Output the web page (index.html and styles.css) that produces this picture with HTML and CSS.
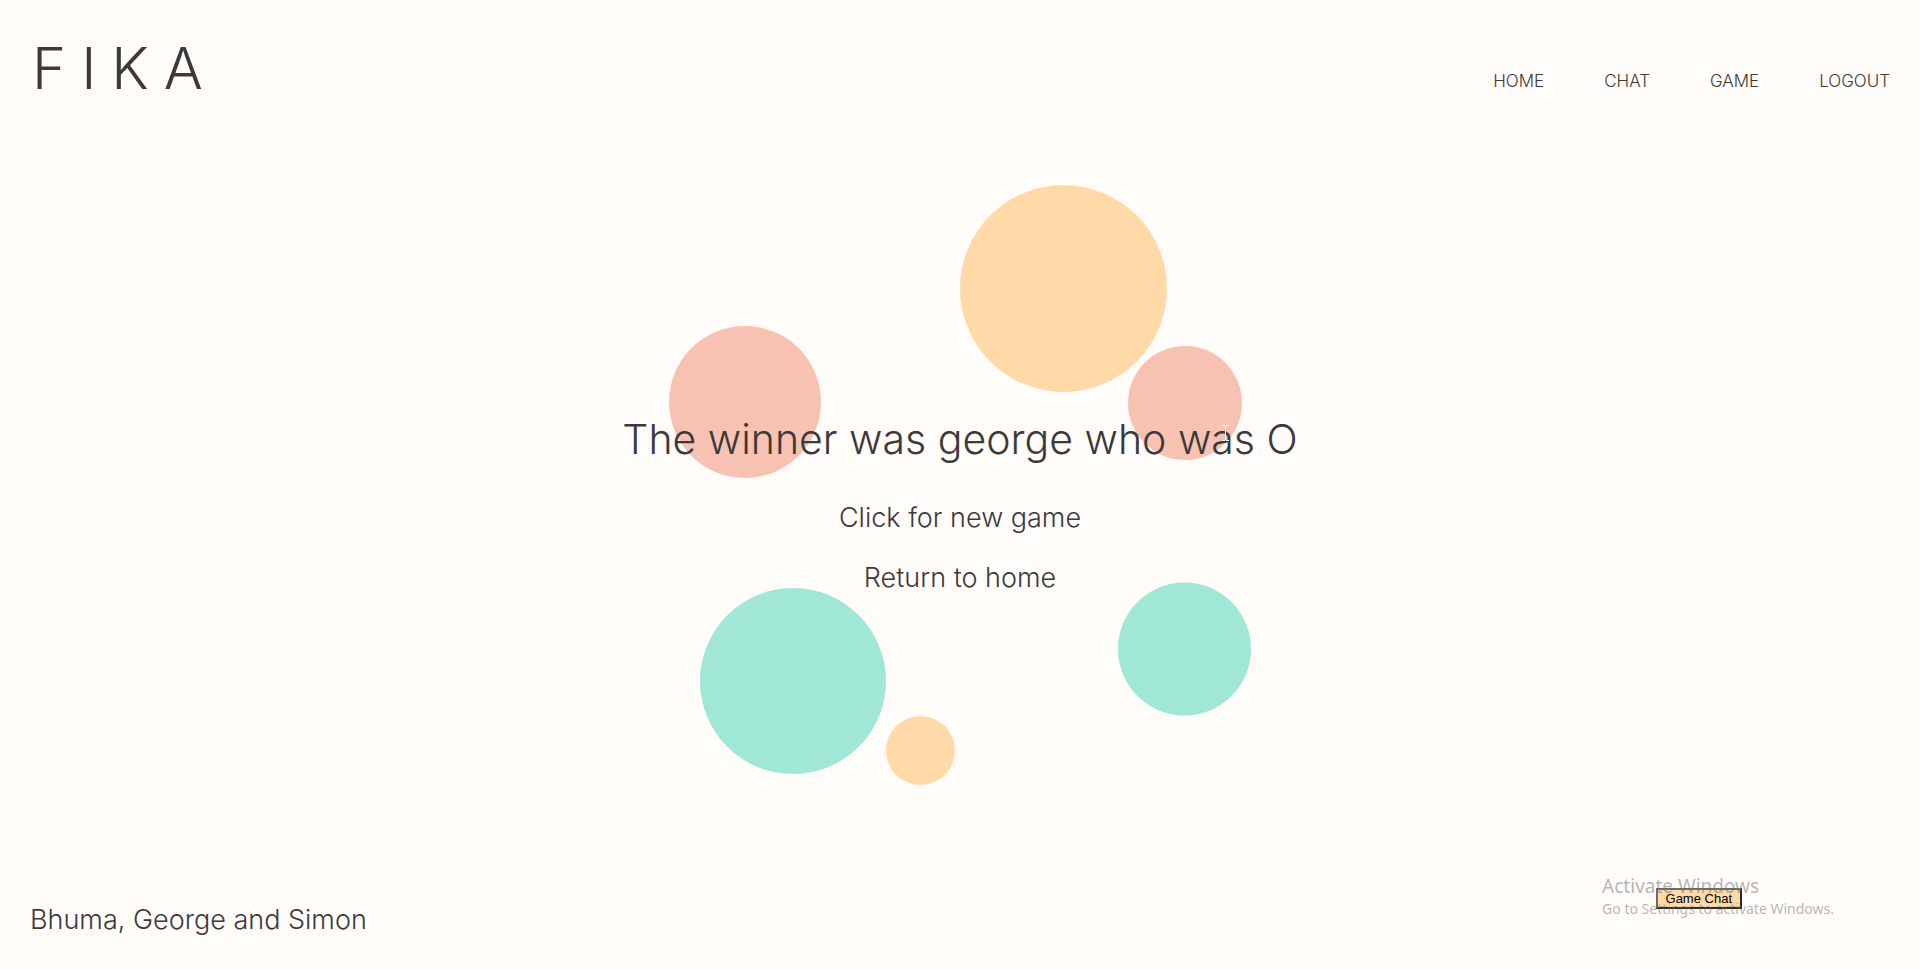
FILE: index.html
```html
<!DOCTYPE html>
<html lang="en">
<head>
<meta charset="utf-8">
<title>Fika</title>
<link rel="stylesheet" href="styles.css">
</head>
<body>
<header class="header">
  <a class="logo" href="#">FIKA</a>
  <nav class="nav">
    <a href="#">HOME</a>
    <a href="#">CHAT</a>
    <a href="#">GAME</a>
    <a href="#">LOGOUT</a>
  </nav>
</header>
<main class="main">
  <svg class="circles" viewBox="0 0 582 600" aria-hidden="true">
    <circle class="sand" cx="394.5" cy="103.5" r="103.5"/>
    <circle class="rose" cx="76" cy="217" r="76"/>
    <circle class="rose" cx="516" cy="218" r="57"/>
    <circle class="mint" cx="124" cy="496" r="93"/>
    <circle class="mint" cx="515.5" cy="464" r="66.5"/>
    <circle class="sand" cx="251.5" cy="565.5" r="34.5"/>
  </svg>
  <div class="result">
    <h1 class="winner">The winner was george who was O</h1>
    <a class="choice" href="#">Click for new game</a>
    <a class="choice" href="#">Return to home</a>
  </div>
  <svg class="pointer" viewBox="0 0 7 16" aria-hidden="true"><path d="M0 .5h3M4 .5h3M3.500 1v14M0 15.500h3M4 15.500h3"/></svg>
</main>
<footer class="footer">
  <p class="authors">Bhuma, George and Simon</p>
  <button class="chat-button" type="button">Game Chat</button>
</footer>
<div class="watermark">
  <p class="watermark-title">Activate Windows</p>
  <p class="watermark-text">Go to Settings to activate Windows.</p>
</div>
</body>
</html>
```
FILE: styles.css
```css
* {
  box-sizing: border-box;
}

body {
  position: relative;
  display: flex;
  flex-direction: column;
  min-height: 100vh;
  margin: 0;
  background: #fffcf9;
  color: #3a3a3a;
  font-family: Inter, "Open Sans", sans-serif;
  font-weight: 300;
}

a {
  color: inherit;
  text-decoration: none;
}

p,
h1 {
  margin: 0;
  font-weight: 300;
}

.header {
  display: flex;
  justify-content: space-between;
  align-items: flex-end;
  padding: 32px 30px 0 32px;
}

.logo {
  font-size: 58px;
  line-height: 72px;
  letter-spacing: 15px;
}

.nav {
  display: flex;
  gap: 60px;
  padding-bottom: 10px;
  font-size: 17px;
  line-height: 26px;
}

.main {
  position: relative;
  flex: 1;
  display: flex;
  justify-content: center;
  padding-top: 300px;
}

.circles {
  position: absolute;
  top: 81px;
  left: 50%;
  width: 582px;
  height: 600px;
  margin-left: -291px;
}

.sand {
  fill: #ffdaa8;
}

.rose {
  fill: #f8c2b3;
}

.mint {
  fill: #a0e8d5;
}

.result {
  position: relative;
  display: flex;
  flex-direction: column;
  align-items: center;
}

.winner {
  margin-bottom: 14px;
  font-size: 41px;
  line-height: 70px;
}

.choice {
  font-size: 27px;
  line-height: 60px;
}

.pointer {
  position: absolute;
  top: 321px;
  left: 50%;
  width: 7px;
  height: 16px;
  margin-left: 262px;
  fill: none;
  stroke: #fff;
}

.footer {
  display: flex;
  justify-content: space-between;
  align-items: flex-start;
  padding: 0 178px 29px 30px;
}

.authors {
  padding-top: 12px;
  font-size: 27px;
  line-height: 40px;
}

.chat-button {
  padding: 1px 8px;
  border: 2px solid;
  border-color: #6b6b6b #2a2a2a #2a2a2a #6b6b6b;
  background: #ffdaa8;
  color: #000;
  font: 13px/15px "Liberation Sans", sans-serif;
}

.watermark {
  position: absolute;
  right: 86px;
  bottom: 49px;
  color: rgba(110, 110, 110, 0.5);
  font-family: "Noto Sans", sans-serif;
  pointer-events: none;
}

.watermark-title {
  font-size: 19px;
  line-height: 24px;
  font-weight: 400;
}

.watermark-text {
  font-size: 14px;
  line-height: 22px;
  font-weight: 400;
}
```
